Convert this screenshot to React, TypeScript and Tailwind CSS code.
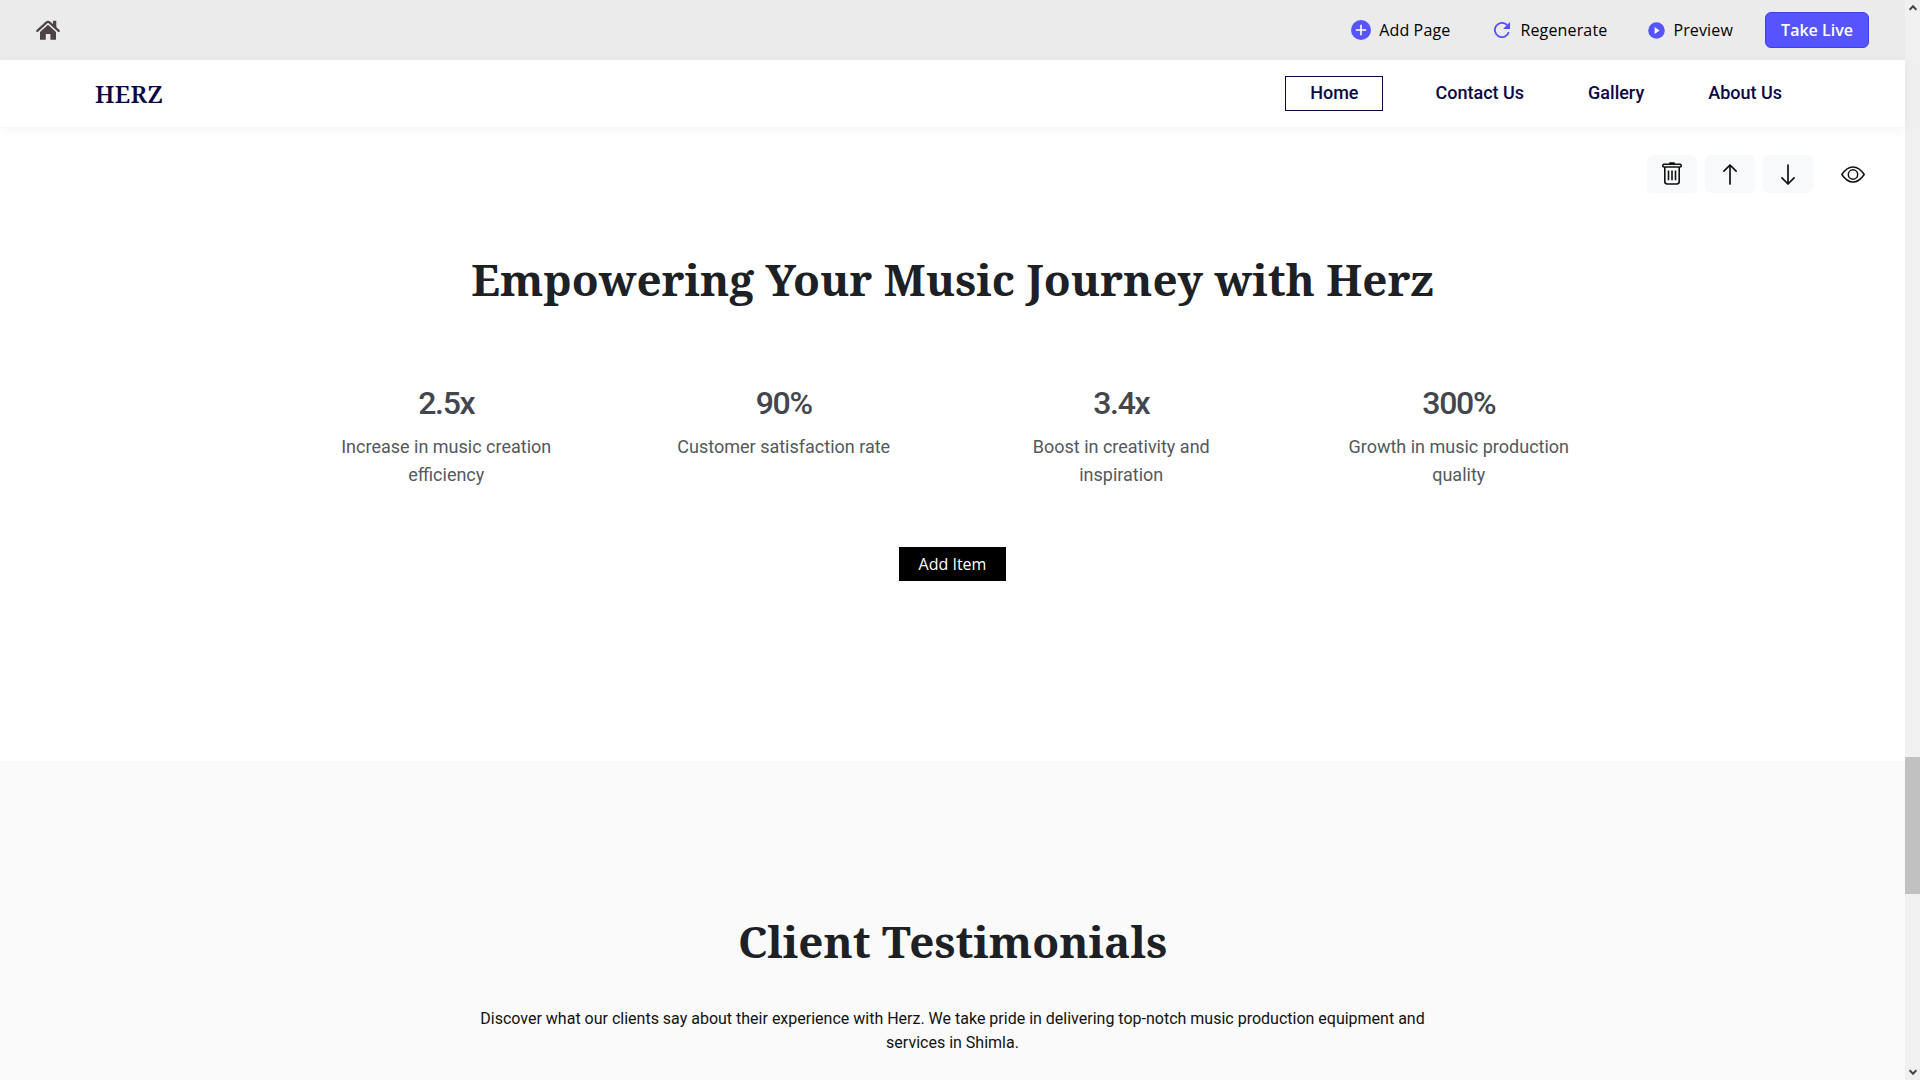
import React from "react";

const stats = [
  { value: "2.5x", label: "Increase in music creation efficiency" },
  { value: "90%", label: "Customer satisfaction rate" },
  { value: "3.4x", label: "Boost in creativity and inspiration" },
  { value: "300%", label: "Growth in music production quality" },
];

const links = ["Contact Us", "Gallery", "About Us"];

function HomeIcon() {
  return (
    <svg className="h-5 w-6" viewBox="0 0 24 20" fill="#4d4343">
      <path d="M1.3 10.9 10.6 2.4q1.4-1.2 2.8 0l9.3 8.500" fill="none" stroke="#4d4343" strokeWidth="2.2" strokeLinecap="round" />
      <path d="M17 .8h3.300v7.200L17 5z" />
      <path d="M12 4.800 20 12v7.700h-5.600V14H9.800v5.700H4V12z" />
    </svg>
  );
}

function PlusIcon() {
  return (
    <svg className="size-5" viewBox="0 0 20 20">
      <circle cx="10" cy="10" r="10" fill="#5654ff" />
      <path d="M10 4.800v10.400M4.800 10h10.400" stroke="#fff" strokeWidth="1.600" />
    </svg>
  );
}

function RefreshIcon() {
  return (
    <svg className="size-4" viewBox="0 0 16 16">
      <path d="M13.200 3.200A7.100 7.100 0 1 0 14.800 10" fill="none" stroke="#5654ff" strokeWidth="1.900" />
      <path d="M16 0v7H9z" fill="#5654ff" />
    </svg>
  );
}

function PlayIcon() {
  return (
    <svg className="size-[17px]" viewBox="0 0 17 17">
      <circle cx="8.500" cy="8.500" r="8.300" fill="#5654ff" />
      <path d="M6.600 5v7L11.600 8.500z" fill="#fff" />
    </svg>
  );
}

function TrashIcon() {
  return (
    <svg className="mb-px h-[23px] w-5" viewBox="0 0 20 23" fill="none" stroke="#111" strokeWidth="1.600">
      <path d="M8 1.300h4" strokeWidth="2" strokeLinecap="round" />
      <rect x=".8" y="2.200" width="18.400" height="2.800" rx="1" />
      <path d="M2.800 5v14.500q0 2.500 2.500 2.500h9.400q2.500 0 2.500-2.500V5M6.500 8.500v9.700M10 8.500v9.700M13.500 8.500v9.700" />
    </svg>
  );
}

function ArrowIcon({ down = false }: { down?: boolean }) {
  return (
    <svg
      className={down ? "mr-px h-[21px] w-[14px] rotate-180" : "mr-px h-[21px] w-[14px]"}
      viewBox="0 0 14 21"
      fill="none"
      stroke="#111"
      strokeWidth="1.700"
      strokeLinecap="round"
      strokeLinejoin="round"
    >
      <path d="M7 20V1M.9 7.200 7 1 13.100 7.200" />
    </svg>
  );
}

function EyeIcon() {
  return (
    <svg className="h-[17px] w-6" viewBox="0 0 24 17" fill="none" stroke="#111" strokeWidth="1.500">
      <path d="M.8 8.500C4 3.700 7.500.9 12 .9s8 2.800 11.200 7.600C20 13.300 16.500 16.100 12 16.100S4 13.300.8 8.500z" strokeLinejoin="round" />
      <circle cx="12" cy="8.500" r="4.700" />
    </svg>
  );
}

function ScrollChevron({ down = false }: { down?: boolean }) {
  return (
    <svg className={down ? "h-[7px] w-2 rotate-180" : "h-[7px] w-2"} viewBox="0 0 8 7">
      <path d="M.6 5.800 4 2.200l3.400 3.600" fill="none" stroke="#444" strokeWidth="2" />
    </svg>
  );
}

function TopBar() {
  return (
    <header className="flex h-[60px] items-center bg-[#ebebeb] pr-9 pl-9 text-base text-black">
      <HomeIcon />
      <div className="ml-auto flex items-center whitespace-nowrap">
        <button className="mr-11 flex items-center gap-2 tracking-[0.15px]">
          <PlusIcon />
          Add Page
        </button>
        <button className="mr-[41px] flex items-center gap-[10px] tracking-[0.15px]">
          <RefreshIcon />
          Regenerate
        </button>
        <button className="mr-8 flex items-center gap-2 tracking-[0.15px]">
          <PlayIcon />
          Preview
        </button>
        <button className="h-9 w-[104px] rounded-md border border-[#403ef5] bg-[#5654ff] font-semibold text-white">
          Take Live
        </button>
      </div>
    </header>
  );
}

function SiteNav() {
  return (
    <nav className="flex h-[67px] items-center justify-between bg-white pr-[123px] pl-[95px] text-[#0b0743] shadow-[0_2px_12px_rgba(0,0,0,0.05)]">
      <span className="font-['Noto_Serif',serif] text-2xl font-semibold tracking-[0.4px]">HERZ</span>
      <ul className="flex items-center gap-16 font-['Roboto',sans-serif] text-lg leading-[31px] font-medium">
        <li className="-mr-3 h-[35px] border border-[#0b0743] px-6">Home</li>
        {links.map((link) => (
          <li key={link} className="h-[33px]">
            {link}
          </li>
        ))}
      </ul>
    </nav>
  );
}

function StatsSection() {
  return (
    <section className="flex h-[634px] flex-col items-center bg-white pt-7">
      <div className="flex items-center gap-2 self-end pr-10">
        <button className="flex h-[38px] w-[50px] items-center justify-center rounded-md bg-[#f8f9fb]">
          <TrashIcon />
        </button>
        <button className="flex h-[38px] w-[50px] items-center justify-center rounded-md bg-[#f8f9fb]">
          <ArrowIcon />
        </button>
        <button className="flex h-[38px] w-[50px] items-center justify-center rounded-md bg-[#f8f9fb]">
          <ArrowIcon down />
        </button>
        <button className="ml-5">
          <EyeIcon />
        </button>
      </div>
      <h2 className="mt-14 font-['Noto_Serif',serif] text-[44px] leading-[60px] font-bold text-[#1d2125]">
        Empowering Your Music Journey with Herz
      </h2>
      <div className="mt-[74px] grid w-[1350px] grid-cols-4 text-center font-['Roboto',sans-serif]">
        {stats.map((s) => (
          <div key={s.value} className="px-12">
            <p className="text-[32px] leading-10 font-medium tracking-[-1.3px] text-[#43464c]">{s.value}</p>
            <p className="mt-[10px] text-lg leading-7 text-[#55585c]">{s.label}</p>
          </div>
        ))}
      </div>
      <button className="mt-[58px] h-[34px] w-[107px] shrink-0 bg-black text-base text-white">Add Item</button>
    </section>
  );
}

function Testimonials() {
  return (
    <section className="flex flex-1 flex-col items-center bg-[#fafafa] pt-[150px] text-center">
      <h2 className="font-['Noto_Serif',serif] text-[44px] leading-[60px] font-bold text-[#1d2125]">Client Testimonials</h2>
      <p className="mt-9 w-[960px] font-['Roboto',sans-serif] text-base text-[#111]">
        Discover what our clients say about their experience with Herz. We take pride in delivering top-notch music
        production equipment and services in Shimla.
      </p>
    </section>
  );
}

export default function App() {
  return (
    <div className="flex h-[1080px] w-[1920px] overflow-hidden font-['Open_Sans',sans-serif]">
      <main className="flex w-[1905px] flex-col">
        <TopBar />
        <div className="z-10">
          <SiteNav />
        </div>
        <StatsSection />
        <Testimonials />
      </main>
      <aside className="flex w-[15px] flex-col items-center justify-between bg-[#f0f0f0] pt-1 pb-1">
        <div className="flex w-full flex-col items-center">
          <ScrollChevron />
          <div className="mt-[746px] h-[137px] w-full bg-[#c1c1c1]" />
        </div>
        <ScrollChevron down />
      </aside>
    </div>
  );
}
